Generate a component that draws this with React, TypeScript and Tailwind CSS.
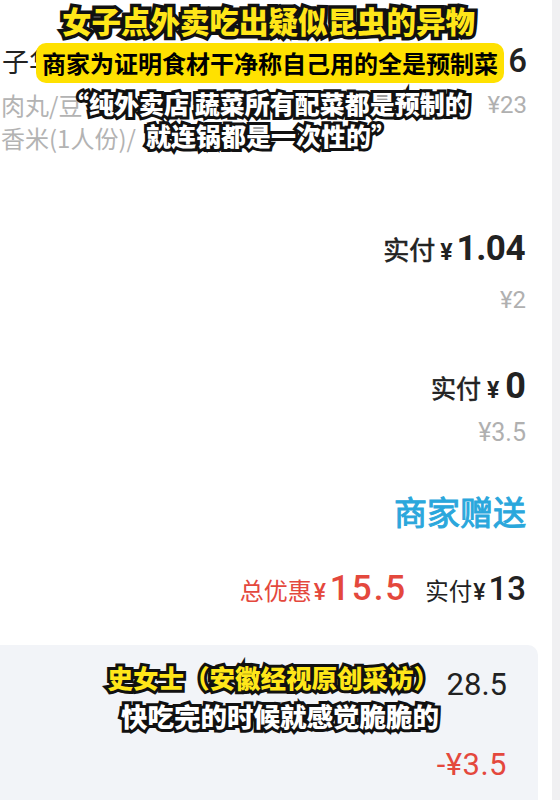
import React from "react";

const cjk = "font-['Noto_Sans_CJK_SC',sans-serif]";
const num = "font-['Roboto','Noto_Sans_CJK_SC',sans-serif]";

export default function App() {
  return (
    <div className={`relative w-[560px] h-[800px] overflow-hidden bg-white flex ${cjk}`}>
      {/* main receipt column */}
      <div className="w-[552px] flex flex-col">
        {/* row A */}
        <div className="mt-[40px] h-[40px] flex items-center justify-between pl-[2px] pr-[25px]">
          <span className="text-[27px] leading-none text-[#222]">子华夫饼</span>
          <span className={`${num} text-[33px] leading-none font-medium text-[#222]`}>6</span>
        </div>
        {/* row B */}
        <div className="mt-[10px] h-[30px] flex items-center justify-between pl-[1px] pr-[25px]">
          <span className="text-[24px] leading-none text-[#b3b3b3] whitespace-nowrap">肉丸/豆</span>
          <span className={`${num} text-[24px] leading-none text-[#b0b0b0]`}>¥23</span>
        </div>
        {/* row C */}
        <div className="mt-[3px] h-[30px] flex items-center pl-[1px]">
          <span className="text-[24px] leading-none text-[#b3b3b3] whitespace-nowrap">香米(1人份)/</span>
        </div>
        {/* 实付 1.04 */}
        <div className="mt-[75px] h-[40px] flex items-center justify-end pr-[27px]">
          <div className="flex items-baseline">
            <span className="text-[26px] leading-none text-[#222] [-webkit-text-stroke:0.6px_#222]">实付</span>
            <span className={`${num} ml-[5px] text-[23px] leading-none font-bold text-[#222]`}>¥</span>
            <span className={`${num} ml-[4px] text-[35px] leading-none font-bold text-[#222] tracking-[-0.5px]`}>1.04</span>
          </div>
        </div>
        {/* ¥2 */}
        <div className="mt-[17px] h-[30px] flex items-center justify-end pr-[26px]">
          <span className={`${num} text-[24px] leading-none text-[#b0b0b0]`}>¥2</span>
        </div>
        {/* 实付 0 */}
        <div className="mt-[51px] h-[40px] flex items-center justify-end pr-[26px]">
          <div className="flex items-baseline">
            <span className="text-[25px] leading-none text-[#222] [-webkit-text-stroke:0.6px_#222]">实付</span>
            <span className={`${num} ml-[6px] text-[23px] leading-none font-bold text-[#222]`}>¥</span>
            <span className={`${num} ml-[6px] text-[36px] leading-none font-bold text-[#222]`}>0</span>
          </div>
        </div>
        {/* ¥3.5 */}
        <div className="mt-[11px] h-[30px] flex items-center justify-end pr-[26px]">
          <span className={`${num} text-[25px] leading-none text-[#b0b0b0]`}>¥3.5</span>
        </div>
        {/* 商家赠送 */}
        <div className="mt-[44px] h-[40px] flex items-center justify-end pr-[26px]">
          <span className="text-[33px] leading-none text-[#2aa7dc] [-webkit-text-stroke:1px_#2aa7dc]">商家赠送</span>
        </div>
        {/* 总优惠 */}
        <div className="mt-[37px] h-[40px] flex items-center justify-end pr-[26px]">
          <div className="flex items-baseline">
            <span className="text-[24px] leading-none text-[#e4483d]">总优惠</span>
            <span className={`${num} ml-[2px] text-[23px] leading-none font-medium text-[#e4483d]`}>¥</span>
            <span className={`${num} ml-[4px] text-[35px] leading-none font-medium text-[#e4483d] tracking-[2px]`}>15.5</span>
            <span className="ml-[18px] text-[23.5px] leading-none text-[#222]">实付</span>
            <span className={`${num} ml-[1px] text-[23px] leading-none font-medium text-[#222]`}>¥</span>
            <span className={`${num} ml-[3px] text-[33px] leading-none font-medium text-[#222]`}>13</span>
          </div>
        </div>
        {/* bottom card */}
        <div className="mt-[37px] flex-1 w-[538px] bg-[#f2f4f8] rounded-tr-[10px] flex flex-col pr-[31px]">
          <div className="mt-[19px] h-[40px] flex items-center justify-end">
            <span className={`${num} text-[31px] leading-none text-[#222]`}>28.5</span>
          </div>
          <div className="mt-[40px] h-[40px] flex items-center justify-end">
            <span className={`${num} text-[31px] leading-none text-[#e4483d] tracking-[0.5px]`}>-¥3.5</span>
          </div>
        </div>
      </div>
      {/* right edge strip */}
      <div className="w-[8px] bg-[#f0f0f2]" />

      {/* caption overlays */}
      <div className="absolute left-[58px] top-0 px-[4px] pt-[4px] pb-[4px] whitespace-nowrap text-[29.5px] leading-[32px] font-black text-[#ffe619] [-webkit-text-stroke:7px_#111] [paint-order:stroke_fill]">
        女子点外卖吃出疑似昆虫的异物
      </div>
      <div className="absolute left-[36px] top-[43px] w-[468px] h-[40px] rounded-[10px] bg-[#ffe100] flex items-center justify-center">
        <span className="text-[24px] leading-none font-bold text-black whitespace-nowrap">商家为证明食材干净称自己用的全是预制菜</span>
      </div>
      <div className="absolute left-[64px] top-[87px] flex flex-col items-start whitespace-nowrap text-[25px] leading-[32px] font-black text-white [-webkit-text-stroke:6px_#111] [paint-order:stroke_fill]">
        <span>“纯外卖店 蔬菜所有配菜都是预制的</span>
        <span className="ml-[82px]">就连锅都是一次性的”</span>
      </div>
      <div className="absolute right-[121px] top-[657px] flex flex-col items-end whitespace-nowrap font-black leading-[39px] [-webkit-text-stroke:6px_#111] [paint-order:stroke_fill]">
        <span className="text-[25.5px] text-[#ffe619]">史女士（安徽经视原创采访）</span>
        <span className="text-[26.5px] text-white">快吃完的时候就感觉脆脆的</span>
      </div>
    </div>
  );
}
